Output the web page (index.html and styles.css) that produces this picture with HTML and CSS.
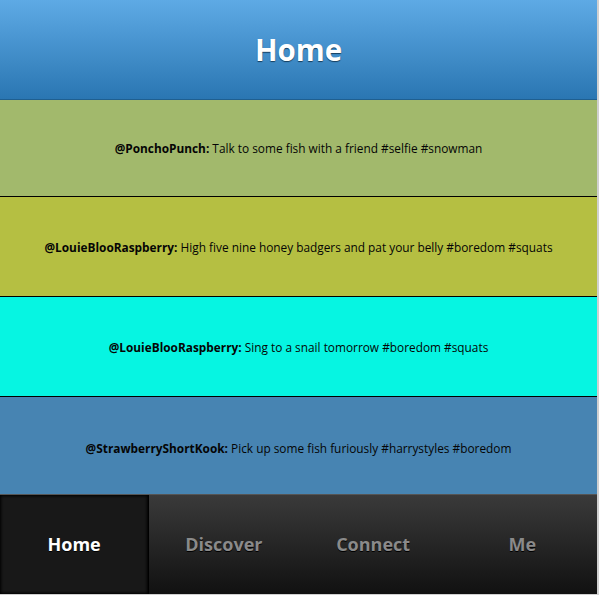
FILE: index.html
```html
<!DOCTYPE html>
<html>
<head>
<meta charset="utf-8">
<link rel="stylesheet" href="styles.css">
</head>
<body>
<div class="page">
  <header class="header"><h1 class="title">Home</h1></header>
  <main class="feed">
    <div class="post post-olive"><p><b>@PonchoPunch:</b> Talk to some fish with a friend #selfie #snowman</p></div>
    <div class="post post-lime"><p><b>@LouieBlooRaspberry:</b> High five nine honey badgers and pat your belly #boredom #squats</p></div>
    <div class="post post-cyan"><p><b>@LouieBlooRaspberry:</b> Sing to a snail tomorrow #boredom #squats</p></div>
    <div class="post post-steel"><p><b>@StrawberryShortKook:</b> Pick up some fish furiously #harrystyles #boredom</p></div>
  </main>
  <nav class="tabs">
    <a class="tab active">Home</a>
    <a class="tab">Discover</a>
    <a class="tab">Connect</a>
    <a class="tab">Me</a>
  </nav>
</div>
</body>
</html>
```
FILE: styles.css
```css
html, body {
  margin: 0;
  padding: 0;
}
body {
  background: #d0d0d0;
  font-family: "Open Sans", "DejaVu Sans", sans-serif;
  width: 599px;
  height: 595px;
  overflow: hidden;
}
.page {
  width: 597px;
  display: flex;
  flex-direction: column;
}
.header {
  height: 99px;
  border-bottom: 1px solid #1f5f90;
  background: linear-gradient(#5eaae5, #2a76b2);
  display: flex;
  align-items: center;
  justify-content: center;
}
.title {
  margin: 0;
  color: #fff;
  font-size: 29.5px;
  font-weight: 700;
  text-shadow: 0 1px 1px #163e5e;
}
.feed {
  display: flex;
  flex-direction: column;
}
.post {
  display: flex;
  align-items: center;
  justify-content: center;
  box-sizing: border-box;
  border-bottom: 1px solid #000;
  color: #050505;
  font-size: 11.85px;
}
.post p {
  margin: 0;
}
.post b {
  font-weight: 700;
}
.post-olive { background: #a2b96c; height: 97px; }
.post-lime { background: #b5bf42; height: 100px; padding-top: 1px; }
.post-cyan { background: #06f5e2; height: 100px; padding-top: 1px; }
.post-steel { background: #4784b2; height: 97px; border-bottom: none; padding-top: 4px; }
.tabs {
  display: grid;
  grid-template-columns: repeat(4, 1fr);
  height: 99px;
  background: linear-gradient(#3a3a3a, #111);
  border-top: 1px solid #555;
}
.tab {
  display: flex;
  align-items: center;
  justify-content: center;
  padding-bottom: 2px;
  color: #8a8a8a;
  font-size: 18px;
  font-weight: 700;
  text-shadow: 0 1px 0 #000;
}
.tab.active {
  color: #fff;
  background: #181818;
  box-shadow: inset 0 0 3px 1px #000;
  border-right: 1px solid #000;
}
```
